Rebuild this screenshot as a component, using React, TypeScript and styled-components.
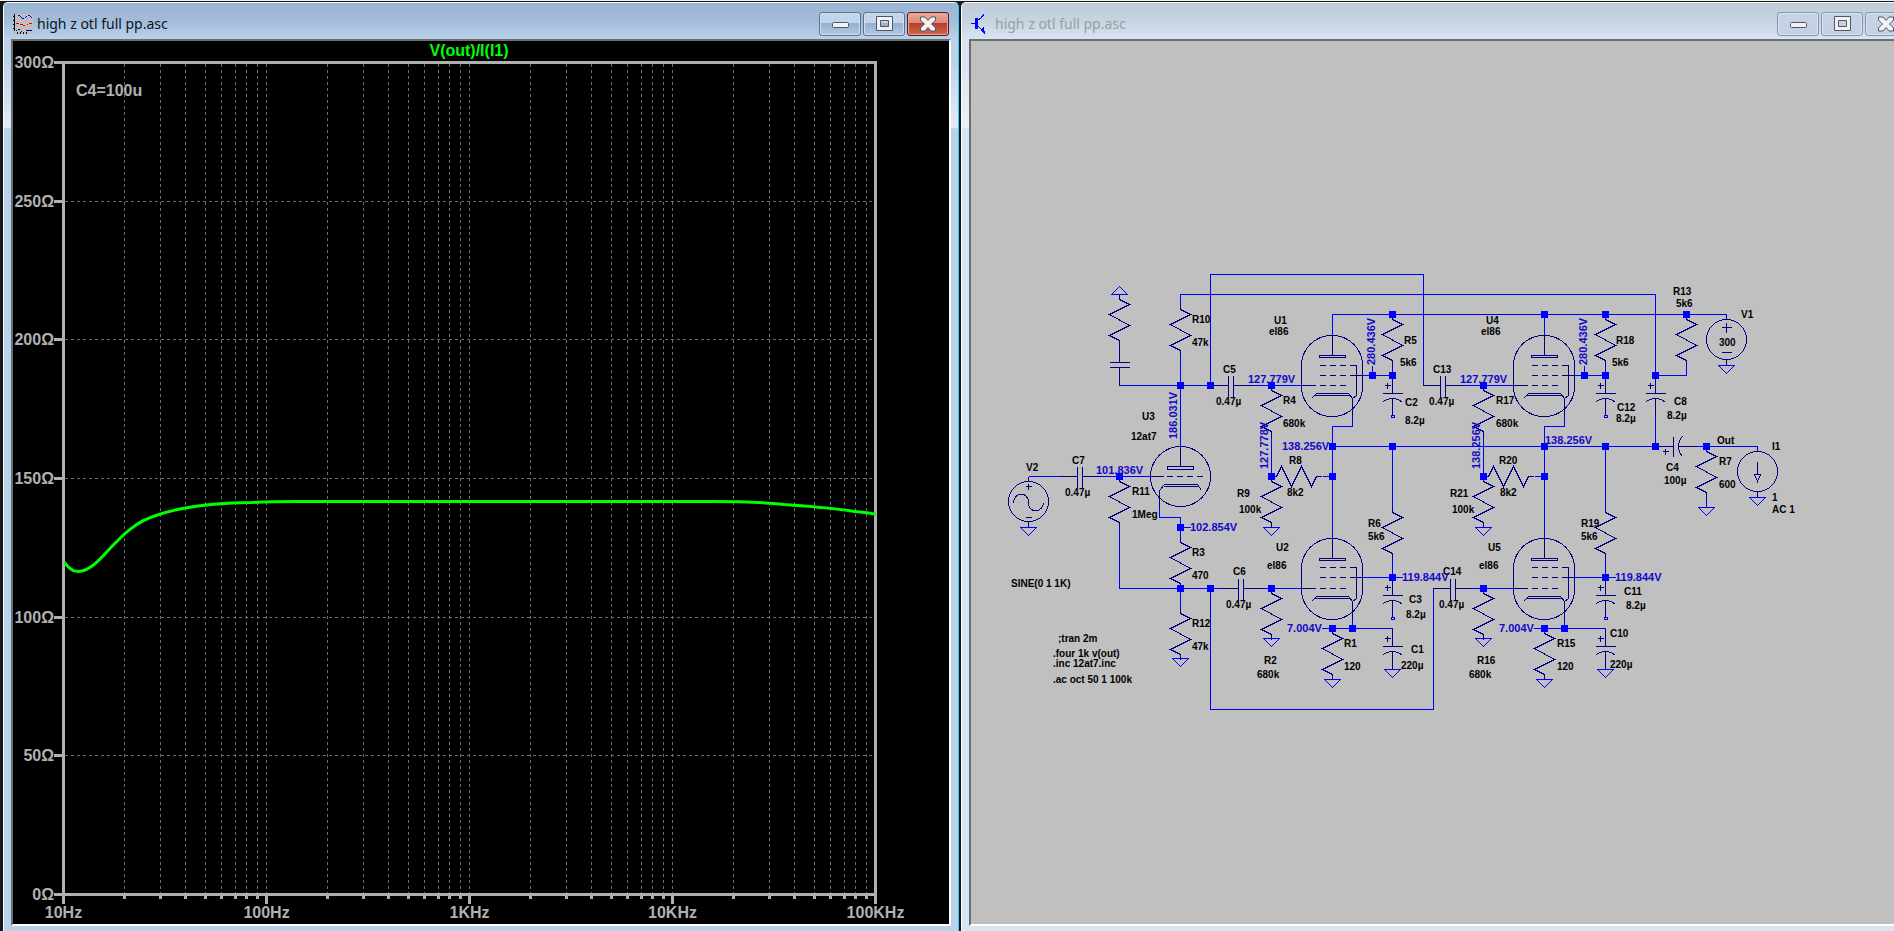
import React from "react";
import styled, { createGlobalStyle, css } from "styled-components";

const WIRE = "#0000ff";
const SYMBOL = "#000080";
const AXIS = "#b0b0b0";

const GlobalStyle = createGlobalStyle`
  * { box-sizing: border-box; }
  body {
    margin: 0;
    background: #15171b;
    font-family: "Noto Sans", "Open Sans", sans-serif;
    overflow: hidden;
  }
`;

const Desktop = styled.main`
  display: flex;
  gap: 2px;
  min-height: 100vh;
  padding-left: 3px;
  border-top: 1px solid #f1f3ee;
  background: #15171b;
  overflow: hidden;
`;

const Frame = styled.section<{ $active: boolean }>`
  flex: 0 0 calc(50vw + 9px);
  display: flex;
  flex-direction: column;
  margin-top: 1px;
  padding: 0 7px 5px;
  border: 1px solid #fbfdff;
  border-bottom: 0;
  border-radius: 5px 5px 0 0;
  ${({ $active }) =>
    $active
      ? css`
          border-right-color: #2fd0f4;
          background: linear-gradient(
            #9ab4d3 0,
            #a3bcda 18px,
            #b9d1ea 36px,
            #bdd3eb 60px,
            #e2ecf7 124px,
            #b9d1ea 126px
          );
        `
      : css`
          background: linear-gradient(
            #bfccd9 0,
            #c6d3e0 18px,
            #d7e4f2 36px,
            #d9e5f2 60px,
            #eaf1f9 124px,
            #d7e4f2 126px
          );
        `}
`;

const TitleBar = styled.header`
  display: flex;
  align-items: center;
  gap: 4px;
  height: 36px;
  padding: 6px 2px 0;
`;

const Title = styled.h1<{ $active: boolean }>`
  flex: 1;
  margin: 0;
  font-size: 14px;
  line-height: 20px;
  font-weight: 400;
  color: ${({ $active }) => ($active ? "#0c1420" : "#9b9ea3")};
`;

const Controls = styled.div`
  display: flex;
  gap: 2px;
`;

const ControlButton = styled.button<{ $tone: "active" | "inactive" | "close" }>`
  display: grid;
  place-items: center;
  width: 42px;
  height: 24px;
  padding: 0;
  border-radius: 3px;
  ${({ $tone }) =>
    $tone === "active" &&
    css`
      border: 1px solid #5c7396;
      background: linear-gradient(#c3d5ea 0 10px, #96b0cd 10px, #b0cae4);
      box-shadow: inset 0 0 0 1px #cfdff0;
    `}
  ${({ $tone }) =>
    $tone === "inactive" &&
    css`
      border: 1px solid #8695b4;
      background: linear-gradient(#c6d3e3, #c3d1e3);
      box-shadow: inset 0 0 0 1px #d8e3f1;
    `}
  ${({ $tone }) =>
    $tone === "close" &&
    css`
      border: 1px solid #5a1a22;
      background: linear-gradient(#e8a99d 0, #d98a7b 10px, #b93c25 10px, #cf6a50);
      box-shadow: inset 0 0 0 1px #e5a497;
    `}
`;

const Client = styled.div<{ $color: string }>`
  border: 2px solid;
  border-color: #6e6e6e #ffffff #ffffff #6e6e6e;
  background: ${({ $color }) => $color};
  flex: 1;
`;

const Drawing = styled.svg`
  display: block;
  width: 100%;
  height: auto;
  font-family: "Liberation Sans", Arial, sans-serif;
  font-weight: 700;
`;

const AxisText = styled.text`
  font-size: 16px;
  fill: ${AXIS};
`;

const TraceName = styled(AxisText)`
  fill: #00ff00;
`;

const PartText = styled.text`
  font-size: 10px;
  fill: #000000;
`;

const VoltageText = styled.text`
  font-size: 11px;
  fill: #1208c8;
`;

/* ---------- window chrome ---------- */

const PlotIcon = () => (
  <svg width="20" height="20" viewBox="0 0 20 20" shapeRendering="crispEdges" aria-hidden="true">
    <rect x="1" width="19" height="20" fill="#c0c0c0" />
    <path d="M1.5 0V17M0 2.5h1M0 6.5h1M0 10.5h1M0 14.5h1" stroke="#000" />
    <path d="M4.5 20v-2M7.5 20v-2M10.5 20v-2M13.5 20v-2" stroke="#000" />
    <path d="M5 1.5h2M7 2.5h1M8 3.500h1M9 4.500h2M12 3.500h1M13 2.500h1M15 1.500h2M17 2.500h1M18 3.500h1" stroke="#0000e0" />
    <path d="M3 9.500h3M7 10.500h3M10 11.500h2M14 10.500h1M16 9.500h3" stroke="#f00000" />
    <path d="M3 16.500h1M5 15.500h2M8 17.500h1M13 16.500h6" stroke="#000080" />
  </svg>
);

const TransistorIcon = () => (
  <svg width="20" height="20" viewBox="0 0 20 20" shapeRendering="crispEdges" aria-hidden="true">
    <path d="M0 9.500h5" stroke="#0000ff" />
    <rect x="4" y="4" width="3" height="11" fill="#0000ff" />
    <path d="M7 6l3-2 3-4M7 12l6 6" stroke="#0000ff" fill="none" strokeWidth="1.200" />
    <path d="M9 16l4-3v6zM10 17h4v3z" fill="#0000ff" />
  </svg>
);

const MinimizeGlyph = () => (
  <svg width="17" height="7" viewBox="0 0 17 7" aria-hidden="true">
    <rect x="0.500" y="1.500" width="16" height="5" rx="1" fill="#f2f2f2" stroke="#50566a" />
  </svg>
);

const MaximizeGlyph = () => (
  <svg width="17" height="16" viewBox="0 0 17 16" aria-hidden="true">
    <path
      d="M.5 .5h16v14H.5zM4.500 4.500v6h8v-6z"
      fill="#f2f2f2"
      fillRule="evenodd"
      stroke="#50566a"
    />
  </svg>
);

const CloseGlyph = () => (
  <svg width="18" height="17" viewBox="0 0 18 17" aria-hidden="true">
    <path
      d="M1.500 1h4.500l3 3.500 3-3.500h4.500v3l-4 4 4 4v3H12l-3-3.500-3 3.500H1.500v-3l4-4-4-4z"
      fill="#f4f4f4"
      stroke="#50566a"
    />
  </svg>
);

interface ChildWindowProps {
  title: string;
  active: boolean;
  color: string;
  icon: React.ReactNode;
  children: React.ReactNode;
}

const ChildWindow = ({ title, active, color, icon, children }: ChildWindowProps) => {
  const tone = active ? "active" : "inactive";
  return (
    <Frame $active={active} aria-label={title}>
      <TitleBar>
        {icon}
        <Title $active={active}>{title}</Title>
        <Controls>
          <ControlButton type="button" $tone={tone} aria-label="Minimize">
            <MinimizeGlyph />
          </ControlButton>
          <ControlButton type="button" $tone={tone} aria-label="Maximize">
            <MaximizeGlyph />
          </ControlButton>
          <ControlButton type="button" $tone={active ? "close" : "inactive"} aria-label="Close">
            <CloseGlyph />
          </ControlButton>
        </Controls>
      </TitleBar>
      <Client $color={color}>{children}</Client>
    </Frame>
  );
};

/* ---------- impedance plot ---------- */

const LEFT = 63.5;
const RIGHT = 875.5;
const TOP = 62.5;
const BOTTOM = 894.5;
const DECADE = 203;

const snap = (v: number) => Math.floor(v) + 0.5;

const minorX = [0, 1, 2, 3].flatMap((d) =>
  [2, 3, 4, 5, 6, 7, 8, 9].map((m) => snap(LEFT + DECADE * (d + Math.log10(m))))
);
const majorX = [0, 1, 2, 3, 4].map((d) => LEFT + DECADE * d);
const frequencies = ["10Hz", "100Hz", "1KHz", "10KHz", "100KHz"];
const ohms = [300, 250, 200, 150, 100, 50, 0];
const ohmY = (o: number) => snap(BOTTOM - ((BOTTOM - TOP) * o) / 300);

const trace =
  "M64 562C69 568 72 571.5 78 571.5C88 571.5 97 563 109 549.5C120 538 134 522 156 515.5" +
  "C180 507 215 503 252 502.500C270 501.500 285 501.500 296 501.500H712" +
  "C740 501.500 770 503 784 504.500C815 506.500 835 508.500 855 511.500C863 512.500 870 512.500 876 514.500";

const ImpedancePlot = () => (
  <Drawing viewBox="13 41 936 883" role="img" aria-label="V(out)/I(I1)">
    <g shapeRendering="crispEdges" fill="none">
      <g stroke="#6c6c6c" strokeDasharray="3 3">
        {[...minorX, ...majorX.slice(1, 4)].map((x) => (
          <path key={x} d={`M${x} 64V893`} />
        ))}
        {ohms.slice(1, 6).map((o) => (
          <path key={o} d={`M65 ${ohmY(o)}H874`} />
        ))}
      </g>
      <g stroke={AXIS} strokeWidth="3">
        <rect x={LEFT} y={TOP} width={RIGHT - LEFT} height={BOTTOM - TOP} />
        {minorX.map((x) => (
          <path key={x} d={`M${x} 896v3`} />
        ))}
        {majorX.map((x) => (
          <path key={x} d={`M${x} 896v8`} />
        ))}
        {ohms.map((o) => (
          <path key={o} d={`M54 ${ohmY(o)}H62`} />
        ))}
      </g>
    </g>
    <path d={trace} fill="none" stroke="#00ff00" strokeWidth="3" />
    {ohms.map((o) => (
      <AxisText key={o} x="54" y={ohmY(o) + 5.5} textAnchor="end">
        {o}Ω
      </AxisText>
    ))}
    {frequencies.map((f, i) => (
      <AxisText key={f} x={majorX[i]} y="918" textAnchor="middle">
        {f}
      </AxisText>
    ))}
    <AxisText x="76" y="96">
      C4=100u
    </AxisText>
    <TraceName x="469" y="56" textAnchor="middle">
      V(out)/I(I1)
    </TraceName>
  </Drawing>
);

/* ---------- schematic symbols ---------- */

interface At {
  x: number;
  y: number;
}

const Resistor = ({ x, y }: At) => (
  <path d={`M${x} ${y}v5l10 5l-20 10l20 11l-20 10l10 5v5`} />
);

const FlatResistor = ({ x, y }: At) => (
  <path d={`M${x} ${y}h5l5 -10l10 20l10 -20l10 20l5 -10h5`} />
);

const Capacitor = ({ x, y }: At) => (
  <path d={`M${x} ${y}h18m0 -10v21m5 -21v21m0 -11h18`} />
);

const PolarCapacitor = ({ x, y }: At) => (
  <path
    d={`M${x} ${y}v18m-10 0h20m-20 9q4 -4 10 -4q6 0 10 4m-10 -4v17M${x - 8} ${y + 10}h6m-3 -3v6`}
  />
);

const Ground = ({ x, y }: At) => <path stroke={WIRE} d={`M${x - 8} ${y}h16l-8 8z`} />;

const OpenEnd = ({ x, y }: At) => <rect x={x - 1} y={y} width="3" height="2" stroke={WIRE} />;

/* (x, y) is the crossing of the anode axis and the control grid row */
const Pentode = ({ x, y, screen }: At & { screen: number }) => (
  <g>
    <rect x={x - 31} y={y - 50} width="61" height="81" rx="30" ry="30" />
    <path d={`M${x} ${y - 50}v20`} />
    <rect x={x - 13} y={y - 30} width="26" height="2" />
    {[-10 - screen, -screen, 0].map((dy) => (
      <path key={dy} d={`M${x - 13} ${y + dy}h6m4 0h6m4 0h6`} />
    ))}
    <path d={`M${x - 31} ${y}h14M${x + 17} ${y - screen}h13`} />
    <path d={`M${x + 17} ${y - 10 - screen}h7V${y + 10}l-4 3`} />
    <path d={`M${x - 21} ${y + 13}l5 -5h32l4 5v18M${x - 18} ${y + 10}h36`} />
  </g>
);

const Triode = ({ x, y }: At) => (
  <g>
    <circle cx={x} cy={y} r="30" />
    <path d={`M${x} ${y - 30}v20`} />
    <rect x={x - 13} y={y - 10} width="26" height="3" />
    <path d={`M${x - 30} ${y}h13m3 0h6m4 0h6m4 0h6m4 0h6`} />
    <path d={`M${x - 21} ${y + 31}v-17l5 -6h33l4 6M${x - 17} ${y + 10}h35`} />
  </g>
);

const resistors = [
  [1119, 294], [1180, 304], [1119, 476], [1180, 537], [1180, 608], [1271, 385], [1271, 476],
  [1271, 588], [1332, 628], [1392, 314], [1392, 507], [1483, 385], [1483, 476], [1483, 588],
  [1544, 628], [1605, 314], [1605, 507], [1686, 314], [1706, 446],
];
const capacitors = [[1059, 476], [1210, 385], [1220, 588], [1422, 385], [1432, 588]];
const polarCapacitors = [
  [1392, 375], [1392, 577], [1392, 628], [1605, 375], [1605, 577], [1605, 628], [1655, 375],
];
const grounds = [
  [1028, 527], [1180, 658], [1271, 527], [1271, 638], [1332, 679], [1392, 669], [1483, 527],
  [1483, 638], [1544, 679], [1605, 669], [1706, 507], [1726, 365], [1757, 497],
];
const openEnds = [[1392, 415], [1392, 617], [1605, 415], [1605, 617]];
const junctions = [
  [1119, 476], [1180, 385], [1210, 385], [1180, 527], [1180, 588], [1210, 588], [1271, 385],
  [1271, 476], [1271, 588], [1332, 446], [1332, 476], [1332, 628], [1352, 628], [1372, 375],
  [1392, 314], [1392, 375], [1392, 446], [1392, 577], [1483, 385], [1483, 476], [1483, 588],
  [1544, 314], [1544, 446], [1544, 476], [1544, 628], [1564, 628], [1584, 375], [1605, 314],
  [1605, 375], [1605, 446], [1605, 577], [1655, 375], [1655, 446], [1686, 314], [1706, 446],
];

const wires = [
  "M1028 476H1059M1099 476H1150",
  "M1119 385H1210M1119 527V588H1220M1261 588H1301",
  "M1180 304V294H1655V375",
  "M1180 355V446M1159 507V517H1180V537M1180 527h10M1180 588V608",
  "M1210 385V274H1423V385M1250 385H1301",
  "M1210 588V709H1433V588M1473 588H1513",
  "M1271 436V476M1322 476H1332M1483 436V476M1534 476H1544",
  "M1332 335V314H1726M1544 314V335",
  "M1352 416V426H1332V538M1564 416V426H1544V538",
  "M1332 446H1655",
  "M1362 375H1392V365M1372 375V365M1574 375H1605V365M1584 375V365",
  "M1392 446V507M1392 558V577M1605 446V507M1605 558V577",
  "M1362 577H1402M1574 577H1615",
  "M1463 385H1513",
  "M1352 619V628M1321 628H1392M1564 619V628M1533 628H1605",
  "M1686 365V375H1655M1655 415V446",
  "M1696 446H1757M1706 497V507",
];

const parts: [number, number, string][] = [
  [1192, 323, "R10"], [1192, 346, "47k"], [1274, 324, "U1"], [1269, 335, "el86"],
  [1223, 373, "C5"], [1216, 405, "0.47µ"], [1283, 404, "R4"], [1283, 427, "680k"],
  [1142, 420, "U3"], [1131, 440, "12at7"], [1072, 464, "C7"], [1026, 471, "V2"],
  [1065, 496, "0.47µ"], [1132, 495, "R11"], [1132, 518, "1Meg"], [1192, 556, "R3"],
  [1192, 579, "470"], [1011, 587, "SINE(0 1 1K)"], [1233, 575, "C6"], [1226, 608, "0.47µ"],
  [1192, 627, "R12"], [1192, 650, "47k"], [1237, 497, "R9"], [1239, 513, "100k"],
  [1276, 551, "U2"], [1267, 569, "el86"], [1264, 664, "R2"], [1257, 678, "680k"],
  [1058, 642, ";tran 2m"], [1053, 657, ".four 1k v(out)"], [1053, 667, ".inc 12at7.inc"],
  [1053, 683, ".ac oct 50 1 100k"], [1289, 464, "R8"], [1287, 496, "8k2"], [1404, 344, "R5"],
  [1400, 366, "5k6"], [1405, 406, "C2"], [1405, 424, "8.2µ"], [1433, 373, "C13"],
  [1429, 405, "0.47µ"], [1486, 324, "U4"], [1481, 335, "el86"], [1496, 404, "R17"],
  [1496, 427, "680k"], [1499, 464, "R20"], [1500, 496, "8k2"], [1450, 497, "R21"],
  [1452, 513, "100k"], [1368, 527, "R6"], [1368, 540, "5k6"], [1443, 575, "C14"],
  [1409, 603, "C3"], [1406, 618, "8.2µ"], [1439, 608, "0.47µ"], [1344, 647, "R1"],
  [1344, 670, "120"], [1411, 653, "C1"], [1401, 669, "220µ"], [1488, 551, "U5"],
  [1479, 569, "el86"], [1477, 664, "R16"], [1469, 678, "680k"], [1616, 344, "R18"],
  [1612, 366, "5k6"], [1673, 295, "R13"], [1676, 307, "5k6"], [1741, 318, "V1"],
  [1719, 346, "300"], [1617, 411, "C12"], [1616, 422, "8.2µ"], [1674, 405, "C8"],
  [1667, 419, "8.2µ"], [1717, 444, "Out"], [1772, 450, "I1"], [1666, 471, "C4"],
  [1664, 484, "100µ"], [1719, 465, "R7"], [1719, 488, "600"], [1772, 501, "1"],
  [1772, 513, "AC 1"], [1581, 527, "R19"], [1581, 540, "5k6"], [1624, 595, "C11"],
  [1626, 609, "8.2µ"], [1610, 637, "C10"], [1610, 668, "220µ"], [1557, 647, "R15"],
  [1557, 670, "120"],
];

const voltages: [number, number, string][] = [
  [1248, 383, "127.779V"], [1096, 474, "101.836V"], [1190, 531, "102.854V"],
  [1282, 450, "138.256V"], [1460, 383, "127.779V"], [1402, 581, "119.844V"],
  [1287, 632, "7.004V"], [1499, 632, "7.004V"], [1545, 444, "138.256V"],
  [1615, 581, "119.844V"],
];

const uprightVoltages: [number, number, string][] = [
  [1177, 439, "186.031V"], [1268, 469, "127.778V"], [1375, 365, "280.436V"],
  [1480, 469, "138.256V"], [1587, 365, "280.436V"],
];

const Schematic = () => (
  <Drawing viewBox="971 41 936 883" role="img" aria-label="Amplifier schematic">
    <g transform="translate(0.5 0.5)" shapeRendering="crispEdges" fill="none">
      <g stroke={WIRE}>
        {wires.map((d) => (
          <path key={d} d={d} />
        ))}
        <path d="M1111 294h16l-8 -8z" />
      </g>
      <g stroke={SYMBOL}>
        {resistors.map(([x, y]) => (
          <Resistor key={`${x}-${y}`} x={x} y={y} />
        ))}
        <FlatResistor x={1271} y={476} />
        <FlatResistor x={1483} y={476} />
        {capacitors.map(([x, y]) => (
          <Capacitor key={`${x}-${y}`} x={x} y={y} />
        ))}
        {polarCapacitors.map(([x, y]) => (
          <PolarCapacitor key={`${x}-${y}`} x={x} y={y} />
        ))}
        <path d="M1119 345V362M1109 362h20M1109 367h20M1119 367V385" />
        <path d="M1655 446h18m0 -10v20m9 -20q-4 4 -4 10q0 6 4 10m-4 -10h18M1662 451h6m-3 -3v6" />
        {grounds.map(([x, y]) => (
          <Ground key={`${x}-${y}`} x={x} y={y} />
        ))}
        {openEnds.map(([x, y]) => (
          <OpenEnd key={`${x}-${y}`} x={x} y={y} />
        ))}
        <Triode x={1180} y={476} />
        <Pentode x={1332} y={385} screen={10} />
        <Pentode x={1544} y={385} screen={10} />
        <Pentode x={1332} y={588} screen={11} />
        <Pentode x={1544} y={588} screen={11} />

        {/* sine source */}
        <circle cx="1028" cy="501" r="20" />
        <path d="M1028 476v5M1028 521v6M1025 486h6M1028 483v6M1025 517h6" />
        <path d="M1013 502c0 -10 15 -12 15 0s15 10 15 0" />

        {/* DC supply */}
        <circle cx="1726" cy="339" r="20" />
        <path d="M1726 314v5M1726 359v6M1721 327h10M1726 322v10M1721 352h10" />

        {/* current source */}
        <circle cx="1757" cy="471" r="20" />
        <path d="M1757 446v5M1757 491v6M1757 461v13M1754 474h6l-3 7z" />
      </g>
      <g fill={WIRE}>
        {junctions.map(([x, y]) => (
          <rect key={`${x}-${y}`} x={x - 3.5} y={y - 3.5} width="7" height="7" />
        ))}
      </g>
    </g>
    {parts.map(([x, y, label]) => (
      <PartText key={`${x}-${y}`} x={x} y={y}>
        {label}
      </PartText>
    ))}
    {voltages.map(([x, y, label]) => (
      <VoltageText key={`${x}-${y}`} x={x} y={y}>
        {label}
      </VoltageText>
    ))}
    {uprightVoltages.map(([x, y, label]) => (
      <VoltageText key={`${x}-${y}`} transform={`translate(${x} ${y}) rotate(-90)`}>
        {label}
      </VoltageText>
    ))}
  </Drawing>
);

export default function App() {
  return (
    <>
      <GlobalStyle />
      <Desktop>
        <ChildWindow title="high z otl full pp.asc" active color="#000000" icon={<PlotIcon />}>
          <ImpedancePlot />
        </ChildWindow>
        <ChildWindow
          title="high z otl full pp.asc"
          active={false}
          color="#c0c0c0"
          icon={<TransistorIcon />}
        >
          <Schematic />
        </ChildWindow>
      </Desktop>
    </>
  );
}
